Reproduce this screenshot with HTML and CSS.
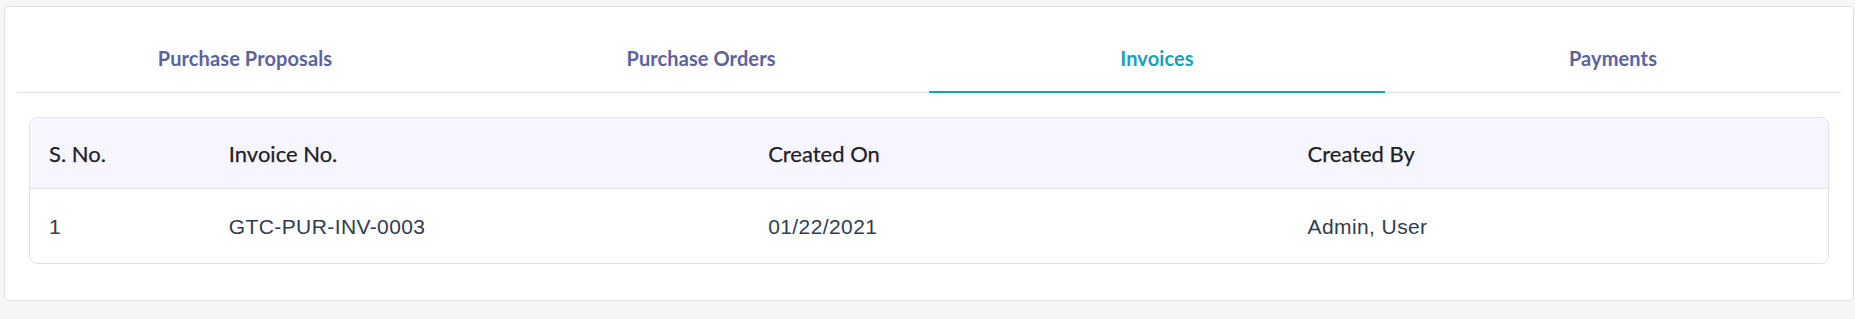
FILE: index.html
```html
<!DOCTYPE html>
<html lang="en">
<head>
    <meta charset="UTF-8">
    <meta name="viewport" content="width=device-width, initial-scale=1.0">
    <title>Invoices</title>
    <link rel="stylesheet" href="styles.css">
</head>
<body>
    <div class="card">
        <ul class="tabs">
            <li><a href="#">Purchase Proposals</a></li>
            <li><a href="#">Purchase Orders</a></li>
            <li><a href="#" class="active">Invoices</a></li>
            <li><a href="#">Payments</a></li>
        </ul>
        <div class="tab-content">
            <div class="table-wrap">
                <table class="list">
                    <thead>
                        <tr>
                            <th class="col-sno">S. No.</th>
                            <th class="col-wide">Invoice No.</th>
                            <th class="col-wide">Created On</th>
                            <th class="col-wide">Created By</th>
                        </tr>
                    </thead>
                    <tbody>
                        <tr>
                            <td>1</td>
                            <td>GTC-PUR-INV-0003</td>
                            <td>01/22/2021</td>
                            <td>Admin, User</td>
                        </tr>
                    </tbody>
                </table>
            </div>
        </div>
    </div>
</body>
</html>
```

FILE: styles.css
```css
*{
    margin: 0;
    padding: 0;
    box-sizing: border-box;
}

body{
    background-color: #f6f6f6;
    padding: 6px 1px 0 4px;
    font-family: Lato, "Liberation Sans", sans-serif;
}

.card{
    background-color: #fff;
    border: 1px solid #dfdfe3;
    border-radius: 5px;
    padding: 12px 12px 24px;
    height: 295px;
}

.tabs{
    display: flex;
    list-style: none;
    border-bottom: 1px solid #dfe0e6;
}
.tabs > li{
    flex: 1;
}
.tabs > li > a{
    display: block;
    text-align: center;
    text-decoration: none;
    color: #5c6399;
    font-weight: bold;
    font-size: 20px;
    line-height: 24px;
    padding: 27px 0 21px;
    border-bottom: 2px solid transparent;
    margin-bottom: -1px;
    letter-spacing: 0.1px;
}
.tabs > li > a.active{
    color: #17a2b8;
    border-bottom-color: #17a2b8;
}

.tab-content{
    padding: 24px 12px 0;
}
.table-wrap{
    border: 1px solid #e1e1e8;
    border-radius: 8px;
    overflow: hidden;
}
.list{
    width: 100%;
    border-collapse: collapse;
    table-layout: fixed;
}
.list th{
    text-align: left;
    background-color: #f7f6fe;
    color: #1f2226;
    font-weight: normal;
    font-size: 22px;
    line-height: 26px;
    padding: 23px 19px 21px;
    border-bottom: 1px solid #e1e1e8;
    -webkit-text-stroke: 0.25px #1f2226;
}
.col-sno{
    width: 10%;
}
.col-wide{
    width: 30%;
}
.list td{
    font-family: "Liberation Sans", Arial, sans-serif;
    color: #323c4c;
    font-size: 21px;
    line-height: 24px;
    letter-spacing: 0.4px;
    padding: 26px 19px 24px;
}
```
